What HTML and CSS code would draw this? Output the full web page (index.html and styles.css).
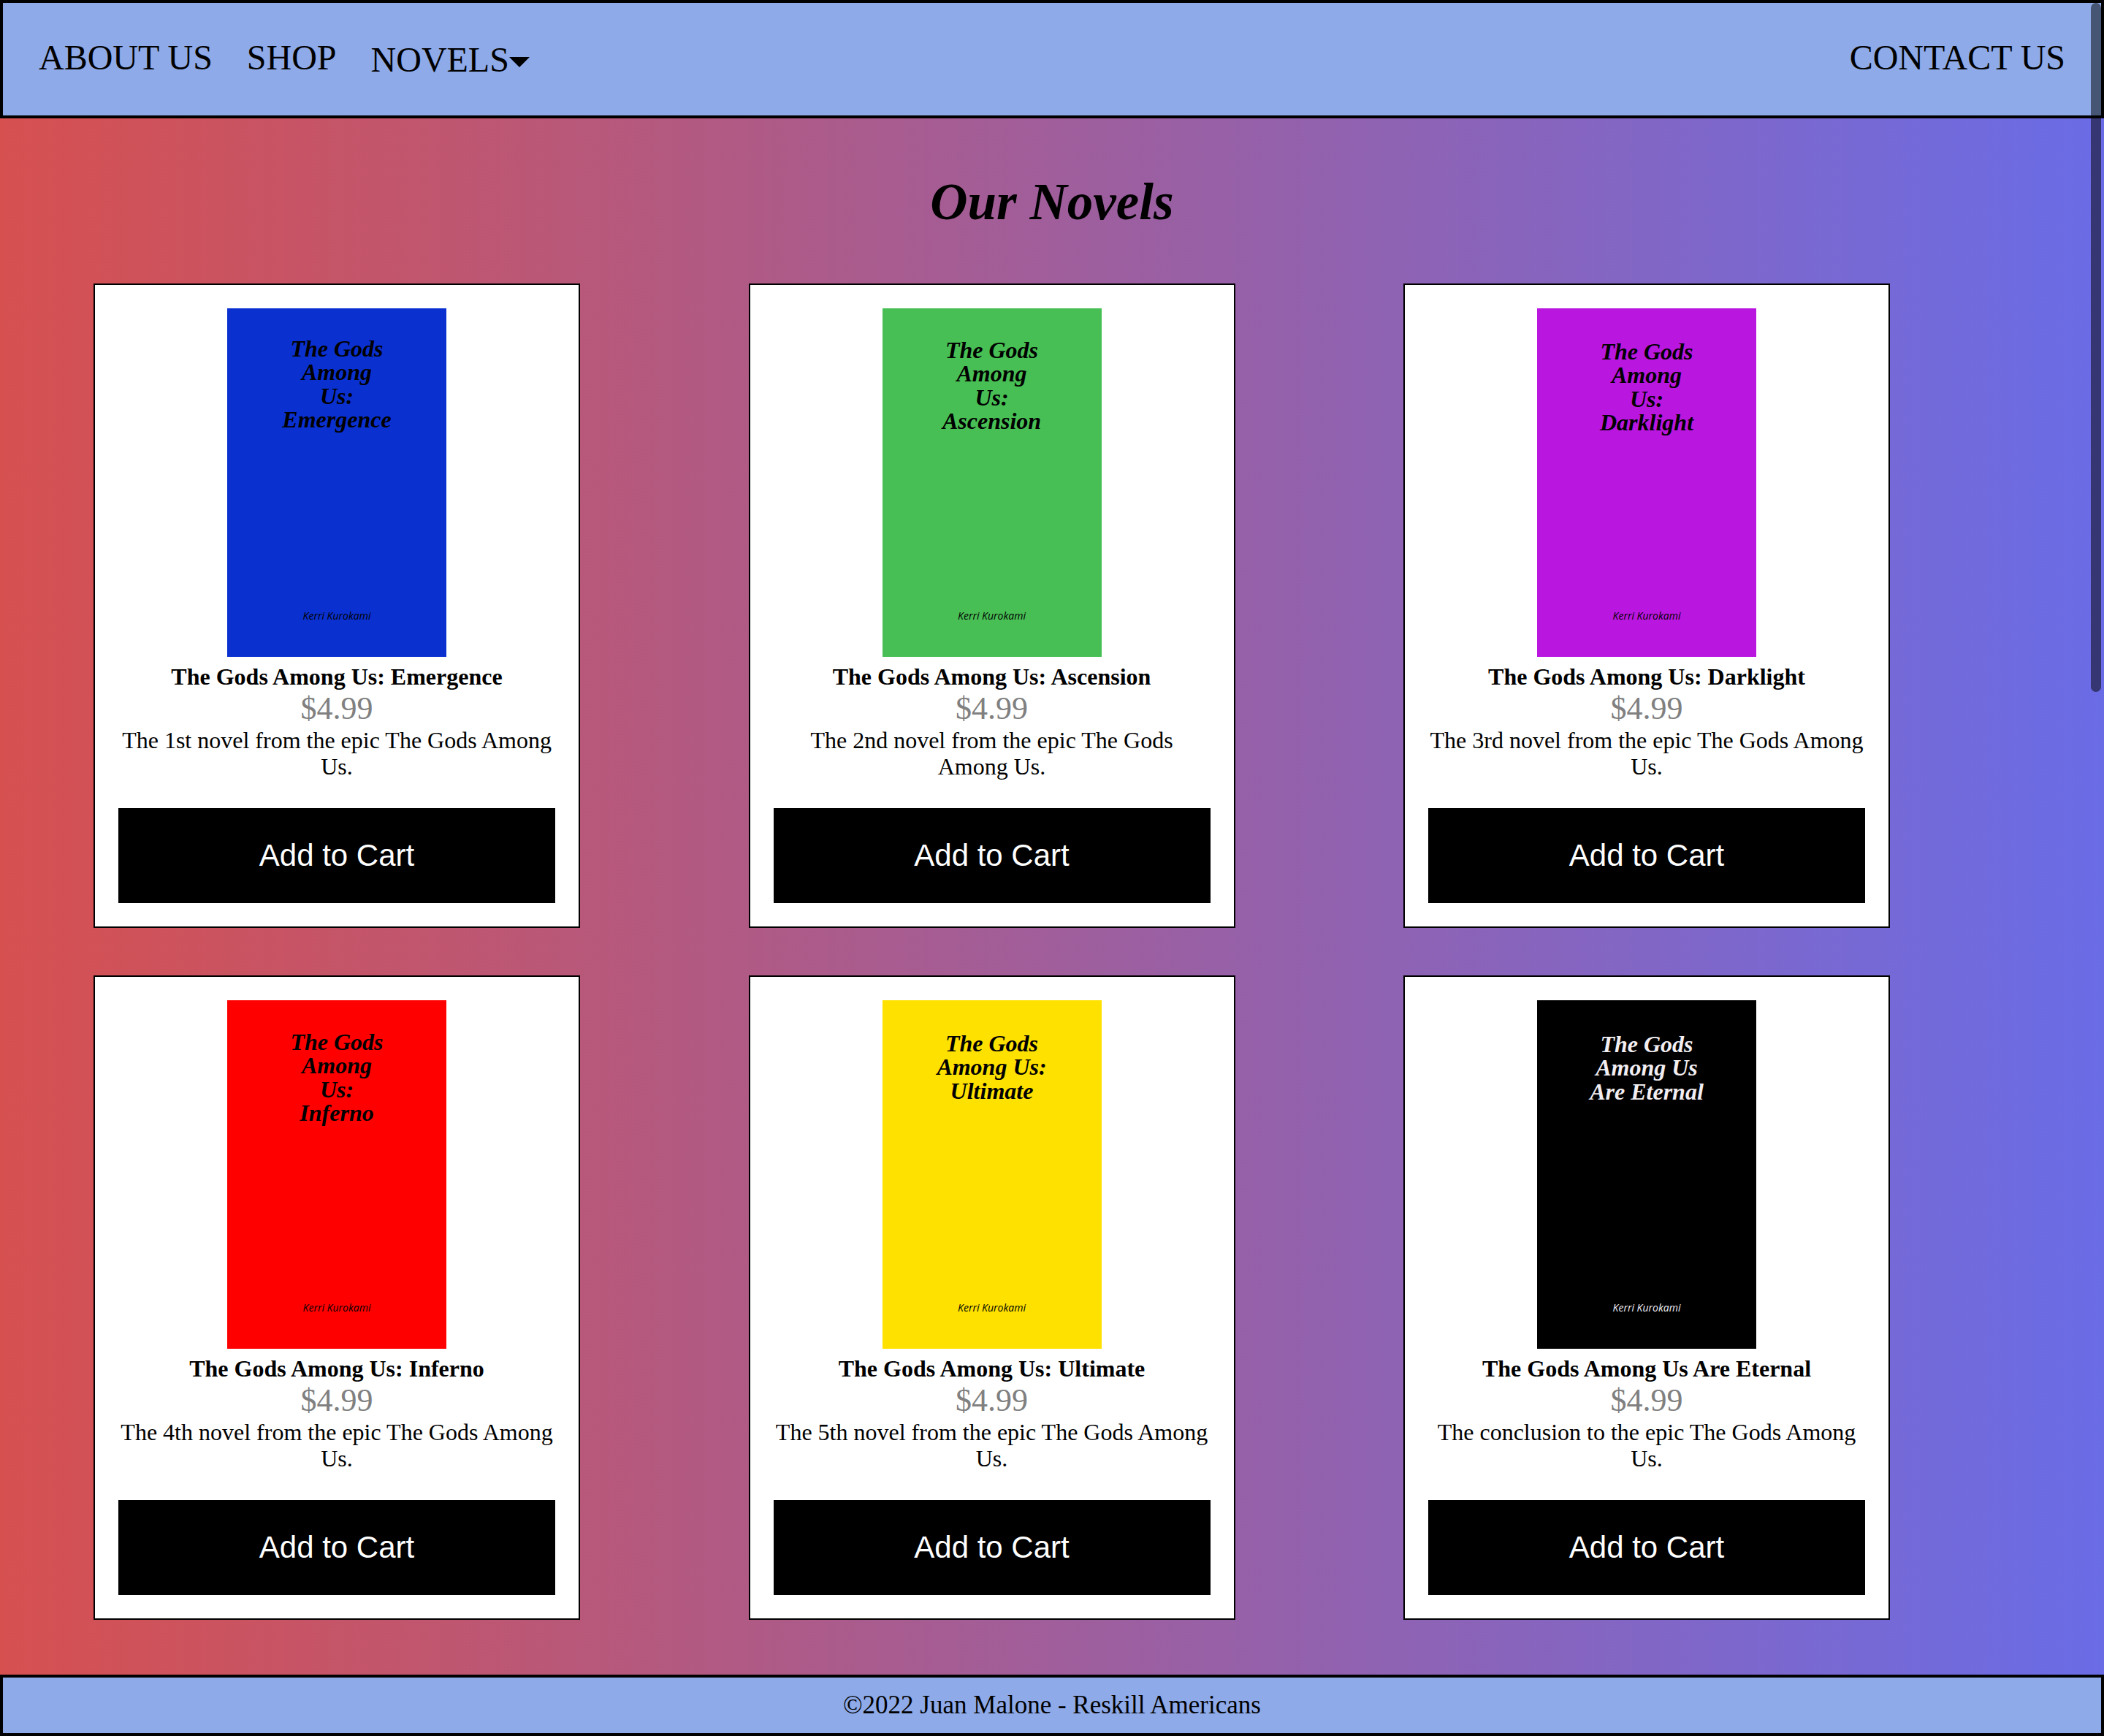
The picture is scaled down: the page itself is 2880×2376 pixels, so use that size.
FILE: index.html
```html
<!DOCTYPE html>
<html lang="en">
<head>
<meta charset="utf-8">
<title>Our Novels</title>
<link rel="stylesheet" href="styles.css">
</head>
<body>
<header class="nav">
  <div class="nav-left">
    <a class="nav-link" href="#">ABOUT US</a>
    <a class="nav-link" href="#">SHOP</a>
    <span class="nav-link nav-dropdown">NOVELS<svg class="caret" viewBox="0 0 28 14" width="28" height="14"><path d="M0 0H28L14 14Z" fill="#000"/></svg></span>
  </div>
  <a class="nav-link" href="#">CONTACT US</a>
</header>

<main class="main">
  <h1 class="page-title">Our Novels</h1>
  <div class="grid">
    <div class="card">
      <div class="cover cover-blue">
        <div class="cover-title">The Gods<br>Among<br>Us:<br>Emergence</div>
        <div class="cover-author">Kerri Kurokami</div>
      </div>
      <div class="book-title">The Gods Among Us: Emergence</div>
      <div class="price">$4.99</div>
      <p class="desc">The 1st novel from the epic The Gods Among Us.</p>
      <button class="btn">Add to Cart</button>
    </div>
    <div class="card">
      <div class="cover cover-green">
        <div class="cover-title">The Gods<br>Among<br>Us:<br>Ascension</div>
        <div class="cover-author">Kerri Kurokami</div>
      </div>
      <div class="book-title">The Gods Among Us: Ascension</div>
      <div class="price">$4.99</div>
      <p class="desc">The 2nd novel from the epic The Gods Among Us.</p>
      <button class="btn">Add to Cart</button>
    </div>
    <div class="card">
      <div class="cover cover-purple">
        <div class="cover-title">The Gods<br>Among<br>Us:<br>Darklight</div>
        <div class="cover-author">Kerri Kurokami</div>
      </div>
      <div class="book-title">The Gods Among Us: Darklight</div>
      <div class="price">$4.99</div>
      <p class="desc">The 3rd novel from the epic The Gods Among Us.</p>
      <button class="btn">Add to Cart</button>
    </div>
    <div class="card">
      <div class="cover cover-red">
        <div class="cover-title">The Gods<br>Among<br>Us:<br>Inferno</div>
        <div class="cover-author">Kerri Kurokami</div>
      </div>
      <div class="book-title">The Gods Among Us: Inferno</div>
      <div class="price">$4.99</div>
      <p class="desc">The 4th novel from the epic The Gods Among Us.</p>
      <button class="btn">Add to Cart</button>
    </div>
    <div class="card">
      <div class="cover cover-yellow">
        <div class="cover-title">The Gods<br>Among Us:<br>Ultimate</div>
        <div class="cover-author">Kerri Kurokami</div>
      </div>
      <div class="book-title">The Gods Among Us: Ultimate</div>
      <div class="price">$4.99</div>
      <p class="desc">The 5th novel from the epic The Gods Among Us.</p>
      <button class="btn">Add to Cart</button>
    </div>
    <div class="card">
      <div class="cover cover-black">
        <div class="cover-title">The Gods<br>Among Us<br>Are Eternal</div>
        <div class="cover-author">Kerri Kurokami</div>
      </div>
      <div class="book-title">The Gods Among Us Are Eternal</div>
      <div class="price">$4.99</div>
      <p class="desc">The conclusion to the epic The Gods Among Us.</p>
      <button class="btn">Add to Cart</button>
    </div>
  </div>
</main>

<footer class="footer">©2022 Juan Malone - Reskill Americans</footer>

<div class="scroll-thumb"></div>
</body>
</html>
```

FILE: styles.css
```css
* {
  box-sizing: border-box;
}

html,
body {
  margin: 0;
  padding: 0;
}

body {
  height: 2376px;
  overflow: hidden;
  display: flex;
  flex-direction: column;
  background: linear-gradient(to right, #d65050, #6a6ce6);
  font-family: "Liberation Serif", "Times New Roman", serif;
  color: #000;
}

/* ---------- Navigation ---------- */
.nav {
  flex: none;
  height: 162px;
  background: #8eaae8;
  border: 4px solid #000;
  display: flex;
  justify-content: space-between;
  align-items: flex-start;
  padding: 48px 49px 0 49px;
}

.nav-left {
  display: flex;
  align-items: flex-start;
  gap: 47px;
}

.nav-link {
  font-size: 48px;
  line-height: 54px;
  color: #000;
  text-decoration: none;
  white-space: nowrap;
}

.nav-dropdown {
  display: flex;
  align-items: center;
  margin-top: 3px;
}

.caret {
  display: block;
  margin-top: 6px;
}

/* ---------- Main ---------- */
.main {
  flex: 1;
  padding-top: 74px;
}

.page-title {
  margin: 0 0 72px;
  font-size: 71px;
  line-height: 80px;
  font-style: italic;
  font-weight: bold;
  text-align: center;
}

.grid {
  display: grid;
  grid-template-columns: repeat(3, 666px);
  column-gap: 230.5px;
  row-gap: 65px;
  padding-left: 128px;
}

.card {
  background: #fff;
  border: 2px solid #000;
  padding: 32px;
  text-align: center;
  display: flex;
  flex-direction: column;
}

/* ---------- Book cover ---------- */
.cover {
  width: 300px;
  height: 477px;
  margin: 0 auto;
  display: flex;
  flex-direction: column;
  justify-content: space-between;
  align-items: center;
  padding-top: 41px;
  padding-bottom: 48px;
  color: #000;
}

.cover-title {
  font-family: "Liberation Serif", "Times New Roman", serif;
  font-style: italic;
  font-weight: bold;
  font-size: 32px;
  line-height: 32.3px;
}

.cover-author {
  font-family: "Open Sans", "Noto Sans", sans-serif;
  font-style: italic;
  font-size: 14px;
  line-height: 16px;
}

.cover-blue {
  background: #0a30d0;
  padding-top: 39px;
}

.cover-green {
  background: #48bf54;
  padding-top: 41px;
}

.cover-purple {
  background: #b916e0;
  padding-top: 43px;
}

.cover-red {
  background: #ff0000;
  padding-top: 41px;
}

.cover-yellow {
  background: #ffe100;
  padding-top: 43px;
}

.cover-black {
  background: #000;
  color: #f2eef2;
  padding-top: 44px;
}

/* ---------- Card text ---------- */
.book-title {
  margin-top: 9px;
  font-size: 32px;
  line-height: 36px;
  font-weight: bold;
}

.price {
  padding-top: 2px;
  font-size: 44px;
  line-height: 48px;
  color: #808080;
}

.desc {
  margin: 1px 0 0;
  font-size: 32px;
  line-height: 36px;
}

.btn {
  margin-top: 39px;
  height: 130px;
  width: 100%;
  background: #000;
  color: #fff;
  border: 0;
  padding: 0;
  font-family: "Liberation Sans", Arial, sans-serif;
  font-size: 42px;
  cursor: pointer;
}

/* ---------- Footer ---------- */
.footer {
  flex: none;
  height: 84px;
  background: #8eaae8;
  border: 4px solid #000;
  display: flex;
  align-items: center;
  justify-content: center;
  padding-bottom: 1px;
  font-size: 35px;
}

/* ---------- Overlay scrollbar thumb ---------- */
.scroll-thumb {
  position: fixed;
  top: 4px;
  right: 4px;
  width: 14px;
  height: 943px;
  border-radius: 7px;
  background: rgba(0, 0, 0, 0.5);
}
```
